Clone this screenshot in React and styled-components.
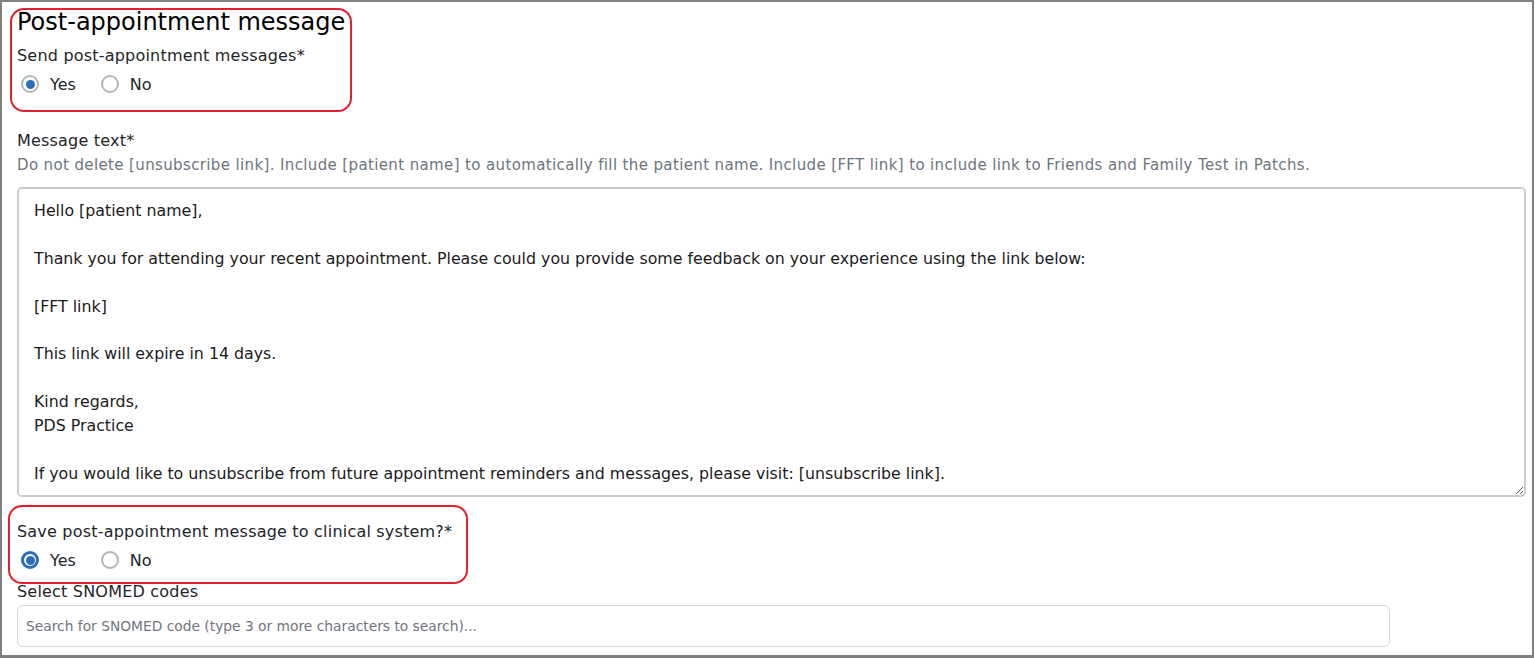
import React from 'react'
import styled, { createGlobalStyle } from 'styled-components'

const GlobalStyle = createGlobalStyle`
  *{
    margin:0;
    padding:0;
    box-sizing:border-box;
  }
  body{
    background:#ffffff;
    font-family: "DejaVu Sans", "Noto Sans", sans-serif;
    color:#212529;
  }`

const Frame = styled.div`
  width: 1534px;
  height: 658px;
  border: 2px solid #7f7f7f;
  border-bottom-width: 3px;
  padding: 5px 0 0 15px;
  overflow: hidden;`

// red annotation ring drawn over a group of fields
const Highlight = styled.div`
  position: relative;
  width: ${p => p.$width}px;

  &::after{
    content: "";
    position: absolute;
    top: ${p => p.$top}px;
    bottom: ${p => p.$bottom}px;
    left: ${p => p.$left}px;
    right: 0;
    border: 2px solid #e3202c;
    border-radius: 14px;
    pointer-events: none;
  }`

const Heading = styled.h2`
  font-size: 24px;
  font-weight: 400;
  line-height: 30px;
  color: #000;
  margin-bottom: 7px;`

const Label = styled.div`
  font-size: 16px;
  letter-spacing: 0.2px;
  line-height: 24px;
  color: #212529;`

const Hint = styled.div`
  font-size: 15px;
  letter-spacing: 0.37px;
  line-height: 24px;
  color: #6c757d;`

const RadioRow = styled.div`
  display: flex;
  align-items: center;
  height: 24px;
  margin-top: 4px;
  padding-left: 4px;
  gap: 25px;`

const RadioOption = styled.label`
  display: flex;
  align-items: center;
  gap: 11px;
  font-size: 16px;
  color: #212529;`

const RadioDot = styled.span`
  width: 18px;
  height: 18px;
  border-radius: 50%;
  border: ${p => (p.$focus ? '3px solid #2b6cb4' : '2px solid #b4b4b4')};
  background: #fff;
  display: flex;
  align-items: center;
  justify-content: center;

  &::after{
    content: "";
    width: ${p => (p.$checked ? '9px' : '0')};
    height: ${p => (p.$checked ? '9px' : '0')};
    border-radius: 50%;
    background: #2a6fb9;
  }`

const Field = styled.div`
  margin-top: ${p => p.$top}px;`

const MessageBox = styled.textarea`
  display: block;
  width: 1509px;
  height: 310px;
  margin-top: 10px;
  padding: 10px 15px;
  border: 2px solid #cccccc;
  border-radius: 5px;
  font-family: "DejaVu Sans", "Noto Sans", sans-serif;
  font-size: 15.8px;
  line-height: 23.9px;
  color: #1a1a1a;
  resize: vertical;
  outline: none;`

const SearchInput = styled.input`
  display: block;
  width: 1373px;
  height: 42px;
  margin-top: 1px;
  padding: 0 8px;
  border: 1px solid #d3d6de;
  border-radius: 6px;
  font-family: "DejaVu Sans", "Noto Sans", sans-serif;
  font-size: 13.8px;
  color: #212529;
  outline: none;

  &::placeholder{
    color: #70757d;
  }`

const message = `Hello [patient name],

Thank you for attending your recent appointment. Please could you provide some feedback on your experience using the link below:

[FFT link]

This link will expire in 14 days.

Kind regards,
PDS Practice

If you would like to unsubscribe from future appointment reminders and messages, please visit: [unsubscribe link].`

function YesNo({ focus }) {
  return (
    <RadioRow>
      <RadioOption>
        <RadioDot $checked $focus={focus} />
        Yes
      </RadioOption>
      <RadioOption>
        <RadioDot />
        No
      </RadioOption>
    </RadioRow>
  )
}

export default function App() {
  return (
    <>
      <GlobalStyle />
      <Frame>
        <Highlight $width={335} $top={1} $bottom={-16} $left={-7}>
          <Heading>Post-appointment message</Heading>
          <Label>Send post-appointment messages*</Label>
          <YesNo />
        </Highlight>

        <Field $top={33}>
          <Label>Message text*</Label>
          <Hint>
            Do not delete [unsubscribe link]. Include [patient name] to automatically fill the patient name. Include [FFT link] to include link to Friends and Family Test in Patchs.
          </Hint>
          <MessageBox defaultValue={message} spellCheck={false} />
        </Field>

        <Field $top={23}>
          <Highlight $width={451} $top={-15} $bottom={-12} $left={-9}>
            <Label>Save post-appointment message to clinical system?*</Label>
            <YesNo focus />
          </Highlight>
          <Field $top={8}>
            <Label>Select SNOMED codes</Label>
            <SearchInput placeholder="Search for SNOMED code (type 3 or more characters to search)..." />
          </Field>
        </Field>
      </Frame>
    </>
  )
}
